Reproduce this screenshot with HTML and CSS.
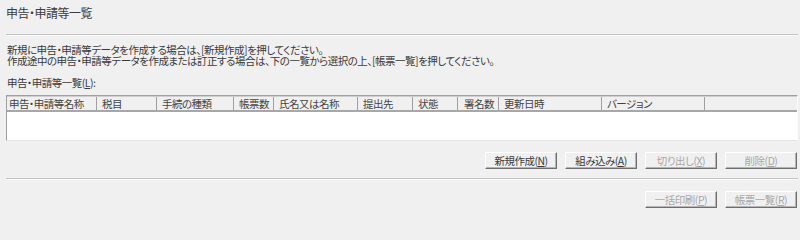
FILE: index.html
```html
<!DOCTYPE html>
<html lang="ja">
<head>
<meta charset="utf-8">
<title>申告・申請等一覧</title>
<link rel="stylesheet" href="styles.css">
</head>
<body>
<div class="page">
  <h1 class="title">申告・申請等一覧</h1>
  <div class="rule rule-top"></div>
  <div class="guide">
    <p>新規に申告・申請等データを作成する場合は、[新規作成]を押してください。</p>
    <p>作成途中の申告・申請等データを作成または訂正する場合は、下の一覧から選択の上、[帳票一覧]を押してください。</p>
  </div>
  <div class="list-label">申告・申請等一覧(<u>L</u>):</div>
  <div class="grid">
    <div class="grid-head">
      <div class="col c1">申告・申請等名称</div>
      <div class="col c2">税目</div>
      <div class="col c3">手続の種類</div>
      <div class="col c4 num">帳票数</div>
      <div class="col c5">氏名又は名称</div>
      <div class="col c6">提出先</div>
      <div class="col c7">状態</div>
      <div class="col c8 num">署名数</div>
      <div class="col c9">更新日時</div>
      <div class="col c10">バージョン</div>
      <div class="col fill"></div>
    </div>
    <div class="grid-body"></div>
  </div>
  <div class="actions actions-top">
    <button class="btn">新規作成(<u>N</u>)</button>
    <button class="btn">組み込み(<u>A</u>)</button>
    <button class="btn" disabled>切り出し(<u>X</u>)</button>
    <button class="btn" disabled>削除(<u>D</u>)</button>
  </div>
  <div class="rule rule-bottom"></div>
  <div class="actions actions-bottom">
    <button class="btn" disabled>一括印刷(<u>P</u>)</button>
    <button class="btn" disabled>帳票一覧(<u>R</u>)</button>
  </div>
</div>
</body>
</html>
```

FILE: styles.css
```css
html, body {
  margin: 0;
  padding: 0;
  background: #f0f0f0;
}

body {
  font-family: "Noto Sans CJK JP", "Noto Sans", sans-serif;
  font-size: 10.5px;
  letter-spacing: -0.5px;
  color: #3a3a3a;
  font-feature-settings: "palt";
}

.page {
  width: 800px;
  height: 208px;
  box-sizing: border-box;
  padding: 6px 2px 0 6px;
  display: flex;
  flex-direction: column;
}

.title {
  margin: 0;
  font-size: 12px;
  font-weight: normal;
  line-height: 14px;
  letter-spacing: -0.5px;
  color: #3c3c3c;
  height: 14px;
}

.rule {
  height: 1px;
  background: #c4c4c4;
  border-bottom: 1px solid #fafafa;
}

.rule-top {
  margin-top: 14px;
}

.guide {
  margin-top: 8px;
  padding-left: 1px;
}

.guide p {
  margin: 0;
  line-height: 11px;
  white-space: nowrap;
}

.list-label {
  margin-top: 11px;
  padding-left: 1px;
  line-height: 12px;
}

.grid {
  margin-top: 6px;
  height: 46px;
  box-sizing: border-box;
  border-top: 1px solid #a0a0a0;
  border-left: 1px solid #a0a0a0;
  border-right: 1px solid #fdfdfd;
  border-bottom: 1px solid #e6e6e6;
  display: flex;
  flex-direction: column;
}

.grid-head {
  display: flex;
  height: 13px;
  background: #f0f0f0;
  border-bottom: 2px solid #a7a7a7;
  border-top: 1px solid #cfcfcf;
}

.col {
  box-sizing: border-box;
  line-height: 13px;
  padding-left: 5px;
  border-right: 1px solid #a0a0a0;
  white-space: nowrap;
  color: #444;
}

.col.num {
  text-align: right;
  padding-left: 0;
  padding-right: 4px;
}

.c1 { width: 90px; padding-left: 2px; }
.c2 { width: 60px; }
.c3 { width: 77px; }
.c4 { width: 40px; }
.c5 { width: 84px; }
.c6 { width: 55px; }
.c7 { width: 45px; }
.c8 { width: 41px; }
.c9 { width: 103px; }
.c10 { width: 103px; }
.fill { flex: 1; border-right: none; }

.grid-body {
  flex: 1;
  background: #ffffff;
}

.actions {
  display: flex;
  justify-content: flex-end;
  gap: 8px;
  padding-right: 1px;
}

.actions-top {
  margin-top: 11px;
}

.actions-bottom {
  margin-top: 11px;
}

.rule-bottom {
  margin-top: 9px;
}

.btn {
  width: 72px;
  height: 17px;
  margin: 0;
  padding: 0;
  box-sizing: border-box;
  font-family: inherit;
  font-size: 10.5px;
  letter-spacing: -0.5px;
  font-feature-settings: "palt";
  line-height: 13px;
  color: #3a3a3a;
  background: #f0f0f0;
  border: 1px solid;
  border-color: #ffffff #6e6e6e #6e6e6e #ffffff;
  box-shadow: inset -1px -1px 0 #b4b4b4;
  text-align: center;
}

.btn:disabled {
  color: #a8a8a8;
}

u {
  text-decoration: underline;
  text-underline-offset: 1px;
}
```
